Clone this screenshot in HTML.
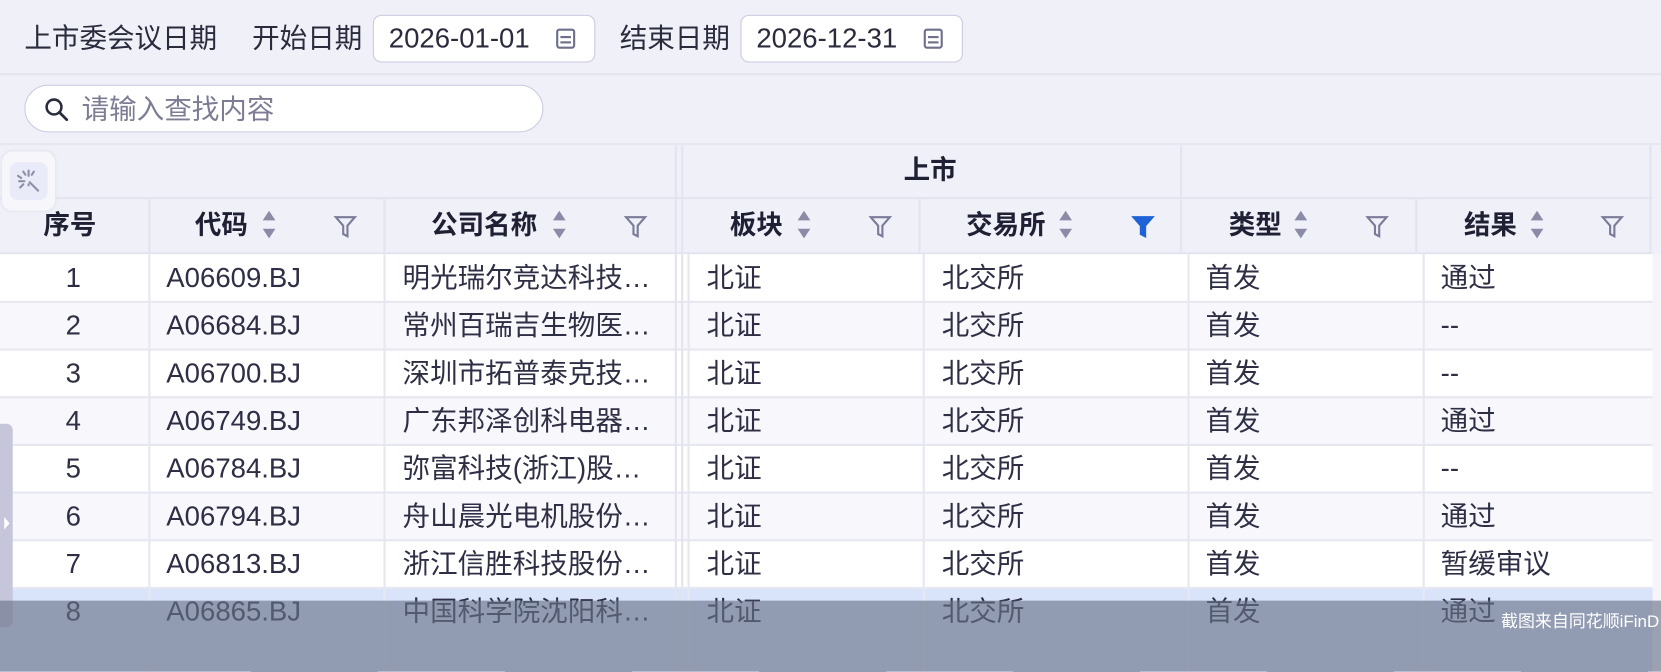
<!DOCTYPE html><html><head><meta charset="utf-8"><style>
*{margin:0;padding:0;box-sizing:border-box}
html,body{width:1661px;height:634px;overflow:hidden;background:#eff0f8}
#w{position:absolute;left:0;top:0;width:1568px;height:599px;transform:scale(1.0593);transform-origin:0 0;font-family:"Liberation Sans","Noto Sans CJK SC",sans-serif;color:#2a2b3d}
.a{position:absolute}
.lbl{font-size:26px;color:#2a2b3d;top:19px;line-height:34px}
.date{top:14px;height:45px;border:1px solid #c9cae0;border-radius:8px;background:#fff;font-size:26px;padding:0 0 0 14px;line-height:43px;color:#2a2b3d}
.cal{position:absolute;right:18px;top:12px;width:18px;height:19px;border:2px solid #6e6f8c;border-radius:3px}
.cal:before{content:"";position:absolute;left:2px;right:2px;top:5px;height:2px;background:#6e6f8c;box-shadow:0 5px 0 #6e6f8c}
.hd{font-weight:bold;font-size:25px;color:#1f2033;top:195px;line-height:36px}
.vl{top:137px;width:2px;background:#e3e4ef}
.row{left:0;width:1560px;height:45px}
.c{position:absolute;font-size:26px;color:#2e2f45;top:0;line-height:45px}
.sort{position:absolute;width:12px;height:26px}
.sort:before,.sort:after{content:"";position:absolute;left:0;border-left:6px solid transparent;border-right:6px solid transparent}
.sort:before{top:0;border-bottom:9px solid #8a8ba6}
.sort:after{bottom:0;border-top:9px solid #8a8ba6}
</style></head><body><div id="w">
<div class="a lbl" style="left:23px">上市委会议日期</div>
<div class="a lbl" style="left:238px">开始日期</div>
<div class="a date" style="left:352px;width:210px">2026-01-01<div class="cal"></div></div>
<div class="a lbl" style="left:585px">结束日期</div>
<div class="a date" style="left:699px;width:210px">2026-12-31<div class="cal"></div></div>
<div class="a" style="left:0;top:69px;width:1661px;height:2px;background:#e4e5ef"></div>
<div class="a" style="left:23px;top:80px;width:490px;height:45px;border:1px solid #c9cae0;border-radius:23px;background:#fff"></div>
<svg class="a" style="left:41px;top:91px" width="26" height="26" viewBox="0 0 26 26"><circle cx="10" cy="10" r="7" fill="none" stroke="#2a2b3d" stroke-width="2.4"/><path d="M15 15l7 7" stroke="#2a2b3d" stroke-width="2.6" stroke-linecap="round"/></svg>
<div class="a" style="left:77px;top:85px;font-size:26px;line-height:36px;color:#7c7d95">请输入查找内容</div>
<div class="a" style="left:0;top:137px;width:1560px;height:103px;background:#eff0f8"></div>
<div class="a" style="left:0;top:186px;width:1560px;height:2px;background:#e3e4ef"></div>
<div class="a" style="left:0;top:238px;width:1560px;height:2px;background:#e3e4ef"></div>
<div class="a" style="left:0;top:135px;width:1661px;height:2px;background:#e6e7f0"></div>
<div class="a vl" style="left:637px;height:103px"></div>
<div class="a vl" style="left:643px;height:103px"></div>
<div class="a vl" style="left:1114px;height:51px"></div>
<div class="a vl" style="left:1557px;height:103px"></div>
<div class="a" style="left:140px;top:188px;width:2px;height:50px;background:#e3e4ef"></div>
<div class="a" style="left:362px;top:188px;width:2px;height:50px;background:#e3e4ef"></div>
<div class="a" style="left:867px;top:188px;width:2px;height:50px;background:#e3e4ef"></div>
<div class="a" style="left:1114px;top:188px;width:2px;height:50px;background:#e3e4ef"></div>
<div class="a" style="left:1336px;top:188px;width:2px;height:50px;background:#e3e4ef"></div>
<div class="a hd" style="left:853px;top:143px">上市</div>
<div class="a hd" style="left:41px">序号</div>
<div class="a hd" style="left:184px">代码</div><div class="sort" style="left:248px;top:199px"></div>
<div class="a hd" style="left:407px">公司名称</div><div class="sort" style="left:522px;top:199px"></div>
<div class="a hd" style="left:689px">板块</div><div class="sort" style="left:753px;top:199px"></div>
<div class="a hd" style="left:912px">交易所</div><div class="sort" style="left:1000px;top:199px"></div>
<div class="a hd" style="left:1160px">类型</div><div class="sort" style="left:1222px;top:199px"></div>
<div class="a hd" style="left:1382px">结果</div><div class="sort" style="left:1445px;top:199px"></div>
<svg width="0" height="0" style="position:absolute"><defs><path id="f" d="M2 3h18l-7 8v10l-4-2v-8z"/></defs></svg>
<svg class="a" style="left:315px;top:202px" width="24" height="24"><use href="#f" fill="none" stroke="#7a7b98" stroke-width="2"/></svg>
<svg class="a" style="left:589px;top:202px" width="24" height="24"><use href="#f" fill="none" stroke="#7a7b98" stroke-width="2"/></svg>
<svg class="a" style="left:820px;top:202px" width="24" height="24"><use href="#f" fill="none" stroke="#7a7b98" stroke-width="2"/></svg>
<svg class="a" style="left:1068px;top:202px" width="24" height="24"><use href="#f" fill="#1e62d8" stroke="#1e62d8" stroke-width="2"/></svg>
<svg class="a" style="left:1289px;top:202px" width="24" height="24"><use href="#f" fill="none" stroke="#7a7b98" stroke-width="2"/></svg>
<svg class="a" style="left:1511px;top:202px" width="24" height="24"><use href="#f" fill="none" stroke="#7a7b98" stroke-width="2"/></svg>
<div class="a" style="left:2px;top:143px;width:50px;height:56px;background:#f7f7fb;border-radius:10px;box-shadow:0 0 3px #dcdde8"></div>
<div class="a" style="left:9px;top:153px;width:36px;height:36px;background:#e9ebf8;border-radius:8px"></div>
<svg class="a" style="left:15px;top:159px" width="24" height="24" viewBox="0 0 24 24" stroke="#8e90a8" stroke-width="2" stroke-linecap="round"><path d="M12 2v5M12 15v1M3 12h5M2 7l3 2M7 3l2 3M17 3l-2 3M4 18l3-3M13 13l8 8"/></svg>
<div class="a row" style="top:240px;background:#fff"><div class="c" style="left:62px">1</div><div class="c" style="left:157px">A06609.BJ</div><div class="c" style="left:380px">明光瑞尔竞达科技…</div><div class="c" style="left:667px">北证</div><div class="c" style="left:889px">北交所</div><div class="c" style="left:1138px">首发</div><div class="c" style="left:1360px">通过</div></div>
<div class="a row" style="top:285px;background:#f8f8fc"><div class="c" style="left:62px">2</div><div class="c" style="left:157px">A06684.BJ</div><div class="c" style="left:380px">常州百瑞吉生物医…</div><div class="c" style="left:667px">北证</div><div class="c" style="left:889px">北交所</div><div class="c" style="left:1138px">首发</div><div class="c" style="left:1360px">--</div></div>
<div class="a row" style="top:330px;background:#fff"><div class="c" style="left:62px">3</div><div class="c" style="left:157px">A06700.BJ</div><div class="c" style="left:380px">深圳市拓普泰克技…</div><div class="c" style="left:667px">北证</div><div class="c" style="left:889px">北交所</div><div class="c" style="left:1138px">首发</div><div class="c" style="left:1360px">--</div></div>
<div class="a row" style="top:375px;background:#f8f8fc"><div class="c" style="left:62px">4</div><div class="c" style="left:157px">A06749.BJ</div><div class="c" style="left:380px">广东邦泽创科电器…</div><div class="c" style="left:667px">北证</div><div class="c" style="left:889px">北交所</div><div class="c" style="left:1138px">首发</div><div class="c" style="left:1360px">通过</div></div>
<div class="a row" style="top:420px;background:#fff"><div class="c" style="left:62px">5</div><div class="c" style="left:157px">A06784.BJ</div><div class="c" style="left:380px">弥富科技(浙江)股…</div><div class="c" style="left:667px">北证</div><div class="c" style="left:889px">北交所</div><div class="c" style="left:1138px">首发</div><div class="c" style="left:1360px">--</div></div>
<div class="a row" style="top:465px;background:#f8f8fc"><div class="c" style="left:62px">6</div><div class="c" style="left:157px">A06794.BJ</div><div class="c" style="left:380px">舟山晨光电机股份…</div><div class="c" style="left:667px">北证</div><div class="c" style="left:889px">北交所</div><div class="c" style="left:1138px">首发</div><div class="c" style="left:1360px">通过</div></div>
<div class="a row" style="top:510px;background:#fff"><div class="c" style="left:62px">7</div><div class="c" style="left:157px">A06813.BJ</div><div class="c" style="left:380px">浙江信胜科技股份…</div><div class="c" style="left:667px">北证</div><div class="c" style="left:889px">北交所</div><div class="c" style="left:1138px">首发</div><div class="c" style="left:1360px">暂缓审议</div></div>
<div class="a row" style="top:555px;height:79px;background:#d9e4fb"><div class="c" style="left:62px">8</div><div class="c" style="left:157px">A06865.BJ</div><div class="c" style="left:380px">中国科学院沈阳科…</div><div class="c" style="left:667px">北证</div><div class="c" style="left:889px">北交所</div><div class="c" style="left:1138px">首发</div><div class="c" style="left:1360px">通过</div></div>
<div class="a" style="left:0;top:284px;width:1560px;height:2px;background:#e6e7f1"></div>
<div class="a" style="left:0;top:329px;width:1560px;height:2px;background:#e6e7f1"></div>
<div class="a" style="left:0;top:374px;width:1560px;height:2px;background:#e6e7f1"></div>
<div class="a" style="left:0;top:419px;width:1560px;height:2px;background:#e6e7f1"></div>
<div class="a" style="left:0;top:464px;width:1560px;height:2px;background:#e6e7f1"></div>
<div class="a" style="left:0;top:509px;width:1560px;height:2px;background:#e6e7f1"></div>
<div class="a" style="left:0;top:554px;width:1560px;height:2px;background:#e6e7f1"></div>
<div class="a" style="left:140px;top:240px;width:2px;height:394px;background:#e6e7f1"></div>
<div class="a" style="left:362px;top:240px;width:2px;height:394px;background:#e6e7f1"></div>
<div class="a" style="left:637px;top:240px;width:2px;height:394px;background:#e3e4ef"></div>
<div class="a" style="left:643px;top:240px;width:2px;height:394px;background:#e3e4ef"></div>
<div class="a" style="left:649px;top:240px;width:2px;height:394px;background:#e6e7f1"></div>
<div class="a" style="left:871px;top:240px;width:2px;height:394px;background:#e6e7f1"></div>
<div class="a" style="left:1121px;top:240px;width:2px;height:394px;background:#e6e7f1"></div>
<div class="a" style="left:1343px;top:240px;width:2px;height:394px;background:#e6e7f1"></div>
<div class="a" style="left:1560px;top:240px;width:101px;height:394px;background:#f4f4f9"></div>
<div class="a" style="left:0;top:400px;width:12px;height:192px;background:#c5c6da;border-radius:0 6px 6px 0"></div>
<div class="a" style="left:4px;top:488px;border-top:6px solid transparent;border-bottom:6px solid transparent;border-left:5px solid #fff"></div>
<div class="a" style="left:0;top:567px;width:1661px;height:67px;background:rgba(105,114,135,0.64)"></div>
<div class="a" style="left:1417px;top:573px;font-size:16px;color:#fff">截图来自同花顺iFinD</div>
</div></body></html>
